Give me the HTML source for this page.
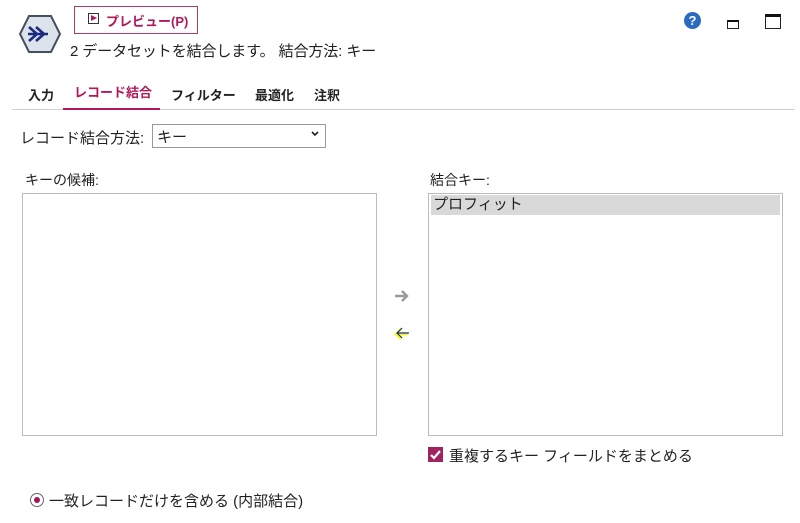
<!DOCTYPE html>
<html><head><meta charset="utf-8"><style>
body{margin:0;width:800px;height:523px;background:#fff;position:relative;overflow:hidden;font-family:"Liberation Sans","Noto Sans CJK JP",sans-serif;color:#222;}
.a{position:absolute;white-space:nowrap;}
</style></head><body>
<svg class="a" style="left:18px;top:14px" width="44" height="40" viewBox="0 0 44 40"><polygon points="11,2 33,2 42,20 33,38 11,38 2,20" fill="#dde3ea" stroke="#44505c" stroke-width="2"/><path d="M11,13 L19,20 L11,27 M18,13 L26,20 L18,27 M10,20 H30" stroke="#1a2a80" stroke-width="2.6" fill="none"/></svg>
<div class="a" style="left:74px;top:6px;width:124px;height:28px;border:1px solid #b03a6a;box-sizing:border-box;"></div>
<div class="a" style="left:88px;top:13px;width:11px;height:11px;border:1px solid #333;box-sizing:border-box;"></div>
<div class="a" style="left:91px;top:15px;width:0;height:0;border-left:6px solid #b0185a;border-top:3.5px solid transparent;border-bottom:3.5px solid transparent;"></div>
<div class="a" style="left:106px;top:11px;font-size:13px;font-weight:bold;color:#b0185a;">プレビュー(P)</div>
<div class="a" style="left:70px;top:40px;font-size:15px;letter-spacing:-0.1px;">2 データセットを結合します。 結合方法: キー</div>
<div class="a" style="left:684px;top:12px;width:17px;height:17px;border-radius:50%;background:#2a6bc0;color:#fff;font-size:13px;font-weight:bold;text-align:center;line-height:17px;">?</div>
<div class="a" style="left:727px;top:20px;width:10px;height:6px;border:1px solid #222;border-top:2px solid #111;"></div>
<div class="a" style="left:765px;top:14px;width:14px;height:11px;border:1px solid #222;border-top:3px solid #111;"></div>
<div class="a" style="left:28px;top:85px;font-size:13px;font-weight:bold;">入力</div>
<div class="a" style="left:74px;top:82px;font-size:13px;font-weight:bold;color:#b0185a;">レコード結合</div>
<div class="a" style="left:171px;top:85px;font-size:13px;font-weight:bold;">フィルター</div>
<div class="a" style="left:255px;top:85px;font-size:13px;font-weight:bold;">最適化</div>
<div class="a" style="left:314px;top:85px;font-size:13px;font-weight:bold;">注釈</div>
<div class="a" style="left:12px;top:109px;width:783px;height:1px;background:#d0d0d0;"></div>
<div class="a" style="left:63px;top:108px;width:97px;height:2px;background:#b0185a;"></div>
<div class="a" style="left:20px;top:127px;font-size:15px;">レコード結合方法:</div>
<div class="a" style="left:152px;top:124px;width:174px;height:24px;border:1px solid #999;box-sizing:border-box;font-size:15px;padding:1px 0 0 4px;">キー</div>
<svg class="a" style="left:311px;top:131px" width="8" height="6"><path d="M1,1 L4,4 L7,1" stroke="#222" stroke-width="1.6" fill="none"/></svg>
<div class="a" style="left:25px;top:170px;font-size:14px;">キーの候補:</div>
<div class="a" style="left:22px;top:193px;width:355px;height:243px;border:1px solid #bbb;box-sizing:border-box;"></div>
<div class="a" style="left:430px;top:170px;font-size:14px;">結合キー:</div>
<div class="a" style="left:428px;top:193px;width:355px;height:243px;border:1px solid #bbb;box-sizing:border-box;"></div>
<div class="a" style="left:431px;top:195px;width:349px;height:20px;background:#d9d9d9;font-size:15px;padding-left:2px;box-sizing:border-box;line-height:20px;">プロフィット</div>
<svg class="a" style="left:394px;top:289px" width="16" height="14"><path d="M1,7 H13 M8,2 L13,7 L8,12" stroke="#999" stroke-width="2.4" fill="none"/></svg>
<svg class="a" style="left:394px;top:326px" width="16" height="14"><path d="M3,7 H15 M8,2 L3,7 L8,12" stroke="#ff0" stroke-width="2.4" fill="none" transform="translate(-1,1)"/><path d="M3,7 H15 M8,2 L3,7 L8,12" stroke="#1a2a90" stroke-width="1.2" fill="none"/></svg>
<div class="a" style="left:428px;top:447px;width:15px;height:15px;background:#a0225e;"></div>
<svg class="a" style="left:428px;top:447px" width="15" height="15"><path d="M3,8 L6,11 L12,4" stroke="#fff" stroke-width="2.2" fill="none"/></svg>
<div class="a" style="left:449px;top:445px;font-size:15px;">重複するキー フィールドをまとめる</div>
<div class="a" style="left:30px;top:493px;width:14px;height:14px;border:1px solid #666;border-radius:50%;box-sizing:border-box;"></div>
<div class="a" style="left:34px;top:497px;width:6px;height:6px;background:#a0185a;border-radius:50%;"></div>
<div class="a" style="left:49px;top:490px;font-size:15px;">一致レコードだけを含める (内部結合)</div>
</body></html>
